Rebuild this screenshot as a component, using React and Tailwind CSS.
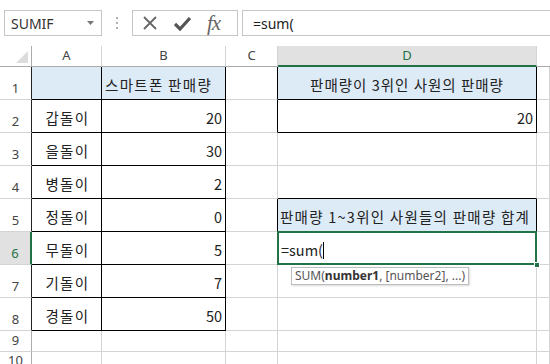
import React from 'react';

const cellFont = { fontFamily: '"Noto Sans CJK KR", "Noto Sans", sans-serif' };

const names = ['갑돌이', '을돌이', '병돌이', '정돌이', '무돌이', '기돌이', '경돌이'];
const sales = [20, 30, 2, 0, 5, 7, 50];

function Cell({ r = 'grey', b = 'grey', className = '', children }) {
  const rc = r === 'black' ? 'border-r-black' : 'border-r-[#d4d4d4]';
  const bc = b === 'black' ? 'border-b-black' : 'border-b-[#d4d4d4]';
  return (
    <div className={`border-r border-b ${rc} ${bc} text-[14.5px] text-[#222] font-['Noto_Sans_CJK_KR',sans-serif] ${className}`}>
      {children}
    </div>
  );
}

function RowHead({ n, active, dark }) {
  return (
    <div
      className={`flex items-end justify-center pb-[1px] text-[13px] font-['Noto_Sans',sans-serif] border-b border-b-[#d4d4d4] ${
        active
          ? 'bg-[#e1e1e1] text-[#217346] border-r-2 border-r-[#217346]'
          : dark
          ? 'bg-white text-[#444] border-r border-r-[#222]'
          : 'bg-white text-[#444] border-r border-r-[#ababab]'
      }`}
    >
      {n}
    </div>
  );
}

function ColHead({ label, active }) {
  return (
    <div
      className={`flex items-center justify-center text-[13px] font-['Noto_Sans',sans-serif] ${
        active
          ? 'bg-[#e1e1e1] text-[#217346] border-b-2 border-b-[#217346] border-r border-r-[#d4d4d4]'
          : 'bg-white text-[#444] border-b border-b-[#ababab] border-r border-r-[#d4d4d4]'
      }`}
    >
      {label}
    </div>
  );
}

export default function App() {
  return (
    <div className="w-[550px] h-[364px] overflow-hidden bg-white relative select-none">
      {/* formula bar */}
      <div className="h-[46px] flex items-start pt-[10px] pl-[4px] font-['Noto_Sans',sans-serif]">
        <div className="w-[98px] h-[26px] border border-[#c6c6c6] flex items-center justify-between pl-[6px] pr-[7px]">
          <span className="text-[14px] text-[#333]">SUMIF</span>
          <svg width="7" height="4" viewBox="0 0 7 4"><path d="M0 0h7L3.5 4z" fill="#777" /></svg>
        </div>
        <div className="w-[30px] h-[26px] flex flex-col items-center justify-center gap-[3px]">
          <span className="w-[2px] h-[2px] bg-[#b0b0b0]" />
          <span className="w-[2px] h-[2px] bg-[#b0b0b0]" />
          <span className="w-[2px] h-[2px] bg-[#b0b0b0]" />
        </div>
        <div className="w-[106px] h-[26px] border border-[#c6c6c6] flex items-center pl-[9px] gap-[16px]">
          <svg width="16" height="16" viewBox="0 0 16 16">
            <path d="M2 2L14 14M14 2L2 14" stroke="#666" strokeWidth="1.8" />
          </svg>
          <svg width="17" height="15" viewBox="0 0 17 15">
            <path d="M1 8L6 13L16 2" stroke="#555" strokeWidth="3.2" fill="none" />
          </svg>
          <span className="text-[21px] italic text-[#666] font-['Liberation_Serif',serif] leading-none tracking-[-1px]">fx</span>
        </div>
        <div className="ml-[4px] flex-1 h-[26px] border-y border-l border-[#c6c6c6] flex items-center pl-[10px]">
          <span className="text-[14px] text-[#222]">=sum(</span>
        </div>
      </div>

      {/* sheet grid */}
      <div
        className="grid grid-cols-[32px_70px_124px_52px_259px_1fr] grid-rows-[21px_33px_33px_33px_33px_33px_33px_33px_33px_21px_20px]"
        style={cellFont}
      >
        {/* header row */}
        <div className="relative bg-white border-r border-r-[#ababab] border-b border-b-[#ababab]">
          <svg className="absolute right-[3px] bottom-[3px]" width="12" height="12" viewBox="0 0 12 12">
            <path d="M12 0V12H0z" fill="#dcdcdc" />
          </svg>
        </div>
        <ColHead label="A" />
        <ColHead label="B" />
        <ColHead label="C" />
        <ColHead label="D" active />
        <div className="bg-white border-b border-b-[#ababab]" />

        {/* row 1 */}
        <RowHead n={1} dark />
        <Cell r="black" b="black" className="bg-[#ddebf7]" />
        <Cell r="black" b="black" className="bg-[#ddebf7] flex items-end pb-[3px] pl-[3px] tracking-[1.3px] whitespace-nowrap">
          스마트폰 판매량
        </Cell>
        <Cell r="black" />
        <Cell r="black" b="black" className="bg-[#ddebf7] flex items-end justify-center pb-[3px] tracking-[1px] whitespace-nowrap">
          판매량이 3위인 사원의 판매량
        </Cell>
        <Cell />

        {[0, 1, 2, 3, 4, 5, 6].map((i) => {
          const row = i + 2;
          const active = row === 6;
          return (
            <React.Fragment key={row}>
              <RowHead n={row} active={active} dark />
              <Cell r="black" b="black" className="flex items-end justify-center pb-[3px] pl-[2px] tracking-[1.4px]">
                {names[i]}
              </Cell>
              <Cell r="black" b="black" className="flex items-end justify-end pb-[3px] pr-[3px]">
                {sales[i]}
              </Cell>
              <Cell r={row === 2 || row === 5 ? 'black' : 'grey'} />
              {row === 2 && (
                <Cell r="black" b="black" className="flex items-end justify-end pb-[3px] pr-[3px]">
                  20
                </Cell>
              )}
              {row === 3 && <Cell />}
              {row === 4 && <Cell b="black" />}
              {row === 5 && (
                <Cell r="black" b="black" className="bg-[#ddebf7] flex items-end pb-[3px] pl-[2px] tracking-[1.25px] whitespace-nowrap overflow-hidden">
                  판매량 1~3위인 사원들의 판매량 합계
                </Cell>
              )}
              {row === 6 && (
                <Cell className="relative flex items-end pb-[3px] pl-[3px]">
                  <div className="absolute -top-px -left-px -right-px -bottom-px border-2 border-[#217346] pointer-events-none" />
                  <div className="absolute -right-[4px] -bottom-[4px] w-[6px] h-[6px] bg-[#217346] border border-white" />
                  <span>=sum(</span>
                  <span className="w-px h-[17px] bg-black mb-[2px]" />
                  <div className="absolute left-[13px] top-[35px] h-[18px] px-[3px] flex items-center bg-white border border-[#bdbdbd] shadow-[1px_1px_2px_rgba(0,0,0,0.15)] text-[12px] text-[#555] font-['Noto_Sans',sans-serif] whitespace-nowrap z-10">
                    SUM(<b className="text-[#333] font-bold">number1</b>, [number2], ...)
                  </div>
                </Cell>
              )}
              {row >= 7 && <Cell />}
              <Cell />
            </React.Fragment>
          );
        })}

        {/* rows 9, 10 */}
        {[9, 10].map((row) => (
          <React.Fragment key={row}>
            <RowHead n={row} />
            <Cell />
            <Cell />
            <Cell />
            <Cell />
            <Cell />
          </React.Fragment>
        ))}
      </div>
    </div>
  );
}
